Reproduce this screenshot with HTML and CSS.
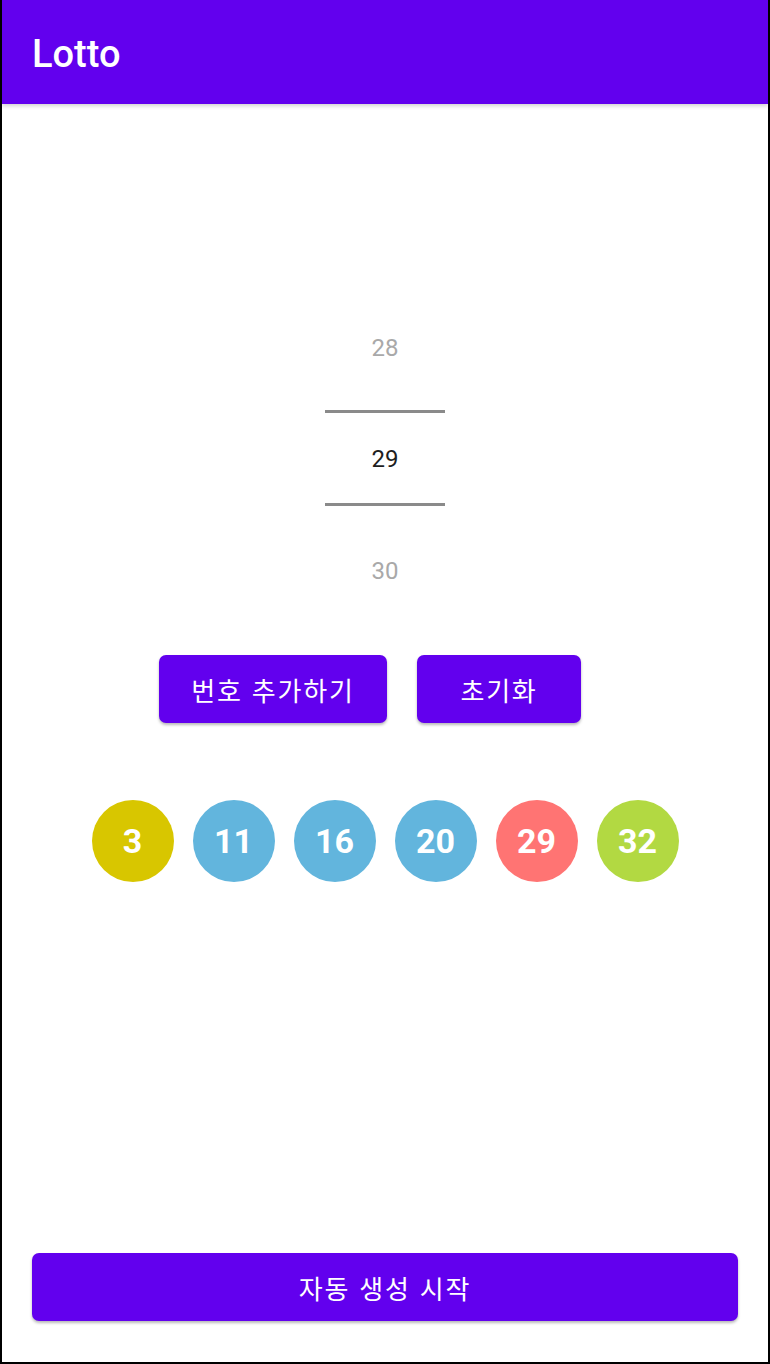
FILE: index.html
```html
<!DOCTYPE html>
<html lang="ko">
<head>
<meta charset="utf-8">
<title>Lotto</title>
<link rel="stylesheet" href="styles.css">
</head>
<body>
<div class="frame">
  <header class="appbar">Lotto</header>
  <main class="content">
    <div class="picker">
      <div class="pick-item dim">28</div>
      <div class="pick-sel">29</div>
      <div class="pick-item dim">30</div>
    </div>
    <div class="actions">
      <button class="btn btn-add">번호 추가하기</button>
      <button class="btn btn-reset">초기화</button>
    </div>
    <div class="balls">
      <span class="ball yellow">3</span>
      <span class="ball blue">11</span>
      <span class="ball blue">16</span>
      <span class="ball blue">20</span>
      <span class="ball red">29</span>
      <span class="ball green">32</span>
    </div>
    <div class="bottom">
      <button class="btn btn-auto">자동 생성 시작</button>
    </div>
  </main>
</div>
</body>
</html>
```
FILE: styles.css
```css
html, body {
  margin: 0;
  padding: 0;
  background: #ffffff;
}
body {
  font-family: Roboto, "Noto Sans CJK KR", sans-serif;
}
.frame {
  box-sizing: border-box;
  width: 770px;
  height: 1364px;
  border-left: 2px solid #000;
  border-right: 2px solid #000;
  border-bottom: 2px solid #000;
  display: flex;
  flex-direction: column;
  background: #fff;
}
.appbar {
  box-sizing: border-box;
  height: 104px;
  flex: none;
  background: #6200ee;
  color: #fff;
  font-family: Roboto, sans-serif;
  font-weight: 500;
  font-size: 38px;
  display: flex;
  align-items: center;
  padding-left: 30px;
  padding-top: 4px;
  box-shadow: 0 2px 4px rgba(0,0,0,0.18);
  position: relative;
  z-index: 1;
}
.content {
  flex: 1;
  display: flex;
  flex-direction: column;
}
.picker {
  margin-top: 188px;
  display: flex;
  flex-direction: column;
  align-items: center;
  font-family: Roboto, sans-serif;
  font-size: 24px;
}
.pick-item {
  height: 112px;
  display: flex;
  align-items: center;
  justify-content: center;
}
.dim {
  color: #a9a9a9;
}
.pick-sel {
  box-sizing: border-box;
  width: 120px;
  height: 96px;
  border-top: 3px solid #8a8a8a;
  border-bottom: 3px solid #8a8a8a;
  margin: 6px 0 9px;
  padding-top: 2px;
  display: flex;
  align-items: center;
  justify-content: center;
  color: #1e1e1e;
}
.actions {
  margin-top: 28px;
  display: flex;
  justify-content: center;
  gap: 30px;
  padding-right: 30px;
}
.btn {
  border: none;
  background: #6200ee;
  color: #fff;
  font-family: "Noto Sans CJK KR", Roboto, sans-serif;
  font-size: 26px;
  letter-spacing: 1.8px;
  height: 68px;
  border-radius: 7px;
  box-shadow: 0 2px 3px rgba(0,0,0,0.28);
  padding: 0;
  display: flex;
  align-items: center;
  justify-content: center;
}
.btn-add { width: 228px; }
.btn-reset { width: 164px; }
.balls {
  margin-top: 77px;
  display: flex;
  justify-content: center;
  gap: 19px;
}
.ball {
  width: 82px;
  height: 82px;
  border-radius: 50%;
  color: #fff;
  font-family: Roboto, sans-serif;
  font-weight: 700;
  font-size: 34px;
  display: flex;
  align-items: center;
  justify-content: center;
}
.yellow { background: #d8c600; }
.blue { background: #62b5dd; }
.red { background: #ff7473; }
.green { background: #b2d942; }
.bottom {
  margin-top: auto;
  padding: 0 30px 41px;
}
.btn-auto {
  width: 100%;
}
```
